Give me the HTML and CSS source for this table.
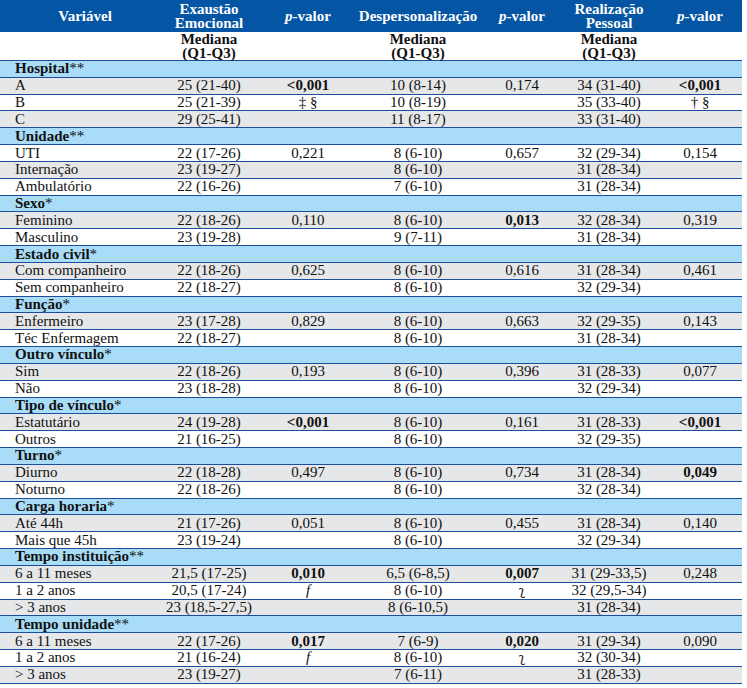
FILE: index.html
```html
<!DOCTYPE html>
<html lang="pt">
<head>
<meta charset="utf-8">
<title>Tabela</title>
<link rel="stylesheet" href="styles.css">
</head>
<body>
<table class="tbl">
  <colgroup>
    <col class="c1"><col class="c2"><col class="c3"><col class="c4"><col class="c5"><col class="c6"><col class="c7">
  </colgroup>
  <thead>
    <tr class="head">
      <th class="h-var">Variável</th>
      <th>Exaustão<br>Emocional</th>
      <th><i>p</i>-valor</th>
      <th>Despersonalização</th>
      <th><i>p</i>-valor</th>
      <th>Realização<br>Pessoal</th>
      <th class="h-last"><i>p</i>-valor</th>
    </tr>
    <tr class="sub">
      <th></th><th>Mediana<br>(Q1-Q3)</th><th></th><th>Mediana<br>(Q1-Q3)</th><th></th><th>Mediana<br>(Q1-Q3)</th><th></th>
    </tr>
  </thead>
  <tbody>
    <tr class="cat"><td colspan="7"><b>Hospital</b>**</td></tr>
    <tr class="g"><td>A</td><td>25 (21-40)</td><td><b>&lt;0,001</b></td><td>10 (8-14)</td><td>0,174</td><td>34 (31-40)</td><td class="last"><b>&lt;0,001</b></td></tr>
    <tr class="w"><td>B</td><td>25 (21-39)</td><td>‡ §</td><td>10 (8-19)</td><td></td><td>35 (33-40)</td><td class="last">† §</td></tr>
    <tr class="g"><td>C</td><td>29 (25-41)</td><td></td><td>11 (8-17)</td><td></td><td>33 (31-40)</td><td class="last"></td></tr>

    <tr class="cat"><td colspan="7"><b>Unidade</b>**</td></tr>
    <tr class="w"><td>UTI</td><td>22 (17-26)</td><td>0,221</td><td>8 (6-10)</td><td>0,657</td><td>32 (29-34)</td><td class="last">0,154</td></tr>
    <tr class="g"><td>Internação</td><td>23 (19-27)</td><td></td><td>8 (6-10)</td><td></td><td>31 (28-34)</td><td class="last"></td></tr>
    <tr class="w"><td>Ambulatório</td><td>22 (16-26)</td><td></td><td>7 (6-10)</td><td></td><td>31 (28-34)</td><td class="last"></td></tr>

    <tr class="cat"><td colspan="7"><b>Sexo</b>*</td></tr>
    <tr class="g"><td>Feminino</td><td>22 (18-26)</td><td>0,110</td><td>8 (6-10)</td><td><b>0,013</b></td><td>32 (28-34)</td><td class="last">0,319</td></tr>
    <tr class="w"><td>Masculino</td><td>23 (19-28)</td><td></td><td>9 (7-11)</td><td></td><td>31 (28-34)</td><td class="last"></td></tr>

    <tr class="cat"><td colspan="7"><b>Estado civil</b>*</td></tr>
    <tr class="g"><td>Com companheiro</td><td>22 (18-26)</td><td>0,625</td><td>8 (6-10)</td><td>0,616</td><td>31 (28-34)</td><td class="last">0,461</td></tr>
    <tr class="w"><td>Sem companheiro</td><td>22 (18-27)</td><td></td><td>8 (6-10)</td><td></td><td>32 (29-34)</td><td class="last"></td></tr>

    <tr class="cat"><td colspan="7"><b>Função</b>*</td></tr>
    <tr class="g"><td>Enfermeiro</td><td>23 (17-28)</td><td>0,829</td><td>8 (6-10)</td><td>0,663</td><td>32 (29-35)</td><td class="last">0,143</td></tr>
    <tr class="w"><td>Téc Enfermagem</td><td>22 (18-27)</td><td></td><td>8 (6-10)</td><td></td><td>31 (28-34)</td><td class="last"></td></tr>

    <tr class="cat"><td colspan="7"><b>Outro vínculo</b>*</td></tr>
    <tr class="g"><td>Sim</td><td>22 (18-26)</td><td>0,193</td><td>8 (6-10)</td><td>0,396</td><td>31 (28-33)</td><td class="last">0,077</td></tr>
    <tr class="w"><td>Não</td><td>23 (18-28)</td><td></td><td>8 (6-10)</td><td></td><td>32 (29-34)</td><td class="last"></td></tr>

    <tr class="cat"><td colspan="7"><b>Tipo de vínculo</b>*</td></tr>
    <tr class="g"><td>Estatutário</td><td>24 (19-28)</td><td><b>&lt;0,001</b></td><td>8 (6-10)</td><td>0,161</td><td>31 (28-33)</td><td class="last"><b>&lt;0,001</b></td></tr>
    <tr class="w"><td>Outros</td><td>21 (16-25)</td><td></td><td>8 (6-10)</td><td></td><td>32 (29-35)</td><td class="last"></td></tr>

    <tr class="cat"><td colspan="7"><b>Turno</b>*</td></tr>
    <tr class="g"><td>Diurno</td><td>22 (18-28)</td><td>0,497</td><td>8 (6-10)</td><td>0,734</td><td>31 (28-34)</td><td class="last"><b>0,049</b></td></tr>
    <tr class="w"><td>Noturno</td><td>22 (18-26)</td><td></td><td>8 (6-10)</td><td></td><td>32 (28-34)</td><td class="last"></td></tr>

    <tr class="cat"><td colspan="7"><b>Carga horaria</b>*</td></tr>
    <tr class="g"><td>Até 44h</td><td>21 (17-26)</td><td>0,051</td><td>8 (6-10)</td><td>0,455</td><td>31 (28-34)</td><td class="last">0,140</td></tr>
    <tr class="w"><td>Mais que 45h</td><td>23 (19-24)</td><td></td><td>8 (6-10)</td><td></td><td>32 (29-34)</td><td class="last"></td></tr>

    <tr class="cat"><td colspan="7"><b>Tempo instituição</b>**</td></tr>
    <tr class="g"><td>6 a 11 meses</td><td>21,5 (17-25)</td><td><b>0,010</b></td><td>6,5 (6-8,5)</td><td><b>0,007</b></td><td>31 (29-33,5)</td><td class="last">0,248</td></tr>
    <tr class="w"><td>1 a 2 anos</td><td>20,5 (17-24)</td><td><i>f</i></td><td>8 (6-10)</td><td class="sym">ʅ</td><td>32 (29,5-34)</td><td class="last"></td></tr>
    <tr class="g"><td>&gt; 3 anos</td><td>23 (18,5-27,5)</td><td></td><td>8 (6-10,5)</td><td></td><td>31 (28-34)</td><td class="last"></td></tr>

    <tr class="cat"><td colspan="7"><b>Tempo unidade</b>**</td></tr>
    <tr class="g"><td>6 a 11 meses</td><td>22 (17-26)</td><td><b>0,017</b></td><td>7 (6-9)</td><td><b>0,020</b></td><td>31 (29-34)</td><td class="last">0,090</td></tr>
    <tr class="w"><td>1 a 2 anos</td><td>21 (16-24)</td><td><i>f</i></td><td>8 (6-10)</td><td class="sym">ʅ</td><td>32 (30-34)</td><td class="last"></td></tr>
    <tr class="g"><td>&gt; 3 anos</td><td>23 (19-27)</td><td></td><td>7 (6-11)</td><td></td><td>31 (28-33)</td><td class="last"></td></tr>
  </tbody>
</table>
</body>
</html>
```

FILE: styles.css
```css
html, body {
  margin: 0;
  padding: 0;
  background: #ffffff;
}

body {
  font-family: "Liberation Serif", "Times New Roman", Times, "DejaVu Serif", serif;
  font-size: 15px;
  color: #111111;
}

.tbl {
  width: 742px;
  border-collapse: collapse;
  table-layout: fixed;
}

.c1 { width: 150px; }
.c2 { width: 118px; }
.c3 { width: 80px; }
.c4 { width: 140px; }
.c5 { width: 68px; }
.c6 { width: 106px; }
.c7 { width: 80px; }

.tbl th,
.tbl td {
  padding: 0;
  text-align: center;
  vertical-align: middle;
  white-space: nowrap;
}

.head th {
  background: #0455a3;
  color: #ffffff;
  font-weight: bold;
  line-height: 14px;
  height: 32px;
}

.head .h-var {
  padding-left: 20px;
}

.head .h-last,
.tbl td.last {
  padding-right: 4px;
}

.sub th {
  background: #ffffff;
  color: #111111;
  font-weight: bold;
  line-height: 14px;
  height: 28px;
  border-bottom: 1px solid #1d4e9e;
}

.tbl tbody td {
  height: 15.84px;
  line-height: 15px;
  border-bottom: 1px solid #1d4e9e;
}

.tbl tbody td:first-child {
  text-align: left;
  padding-left: 15px;
}

.cat td {
  background: #a9dcf7;
}

.g td {
  background: #e6e7e8;
}

.w td {
  background: #ffffff;
}

.sym {
  font-family: "DejaVu Serif", serif;
  font-size: 13px;
}
```
